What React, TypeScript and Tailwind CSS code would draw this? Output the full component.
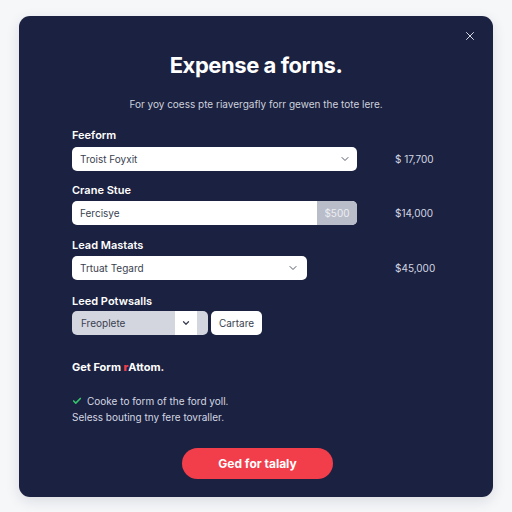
import { ChevronDown, X, Check } from 'lucide-react';

const font = { fontFamily: 'Inter, "Noto Sans", sans-serif' };

function Amount({ children }: { children: React.ReactNode }) {
  return <span className="ml-[38px] text-[10px] text-[#d3d7e3]">{children}</span>;
}

export default function App() {
  return (
    <div className="min-h-[512px] bg-[#f6f7f9] pt-[16px] pl-[19px]" style={font}>
      <div className="relative w-[474px] rounded-[11px] bg-[#1b2140] pb-[18px] pl-[53px] pr-[40px] shadow-[0_4px_14px_rgba(20,25,50,0.12)]">
        {/* close */}
        <button className="absolute right-[16px] top-[13px] text-[#e4e7f0]">
          <X className="h-[14px] w-[14px]" strokeWidth={1.6} />
        </button>

        <h1 className="-ml-[53px] -mr-[40px] pt-[34px] text-center text-[22px] font-bold leading-[30px] tracking-[-0.02em] text-white">
          Expense a forns.
        </h1>
        <p className="-ml-[53px] -mr-[40px] mt-[16px] text-center text-[10px] leading-[16px] text-[#cdd1dd]">
          For yoy coess pte riavergafly forr gewen the tote lere.
        </p>

        {/* field 1 */}
        <div className="mt-[15px] text-[11px] font-semibold leading-[16px] text-white">Feeform</div>
        <div className="mt-[4px] flex items-center">
          <div className="flex h-[24px] w-[285px] items-center justify-between rounded-[5px] bg-white pl-[8px] pr-[6px]">
            <span className="text-[10px] text-[#3a3f50]">Troist Foyxit</span>
            <ChevronDown className="h-[12px] w-[12px] text-[#555a6a]" strokeWidth={2} />
          </div>
          <Amount>$ 17,700</Amount>
        </div>

        {/* field 2 */}
        <div className="mt-[11px] text-[11px] font-semibold leading-[16px] text-white">Crane Stue</div>
        <div className="mt-[3px] flex items-center">
          <div className="flex h-[24px] w-[285px] overflow-hidden rounded-[5px] bg-white">
            <span className="flex flex-1 items-center pl-[8px] text-[10px] text-[#3a3f50]">Fercisye</span>
            <span className="flex w-[40px] items-center justify-center bg-[#b9bcc9] text-[10px] text-[#eceef3]">$500</span>
          </div>
          <Amount>$14,000</Amount>
        </div>

        {/* field 3 */}
        <div className="mt-[12px] text-[11px] font-semibold leading-[16px] text-white">Lead Mastats</div>
        <div className="mt-[3px] flex items-center">
          <div className="flex h-[24px] w-[235px] items-center justify-between rounded-[5px] bg-white pl-[8px] pr-[8px]">
            <span className="text-[10px] text-[#3a3f50]">Trtuat Tegard</span>
            <ChevronDown className="h-[12px] w-[12px] text-[#555a6a]" strokeWidth={2} />
          </div>
          <Amount>
            <span className="ml-[50px]">$45,000</span>
          </Amount>
        </div>

        {/* field 4 */}
        <div className="mt-[13px] text-[11px] font-semibold leading-[16px] text-white">Leed Potwsalls</div>
        <div className="mt-[2px] flex items-center gap-[3px]">
          <div className="flex h-[24px] w-[136px] overflow-hidden rounded-[5px] bg-[#d3d5df]">
            <span className="flex w-[103px] items-center pl-[9px] text-[10px] text-[#3a3f50]">Freoplete</span>
            <span className="flex w-[22px] items-center justify-center bg-white">
              <ChevronDown className="h-[10px] w-[10px] text-[#3a3f50]" strokeWidth={3} />
            </span>
          </div>
          <button className="h-[24px] w-[51px] rounded-[5px] bg-white text-[10px] text-[#3a3f50]">Cartare</button>
        </div>

        <div className="mt-[24px] text-[11px] font-bold leading-[16px] text-white">
          Get Form <span className="font-black text-[#ef3e4a]">r</span>Attom.
        </div>

        <div className="mt-[18px] text-[10px] leading-[16px] text-[#d3d7e3]">
          <div className="flex items-center gap-[5px]">
            <Check className="h-[10px] w-[10px] text-[#34c26a]" strokeWidth={4} />
            <span>Cooke to form of the ford yoll.</span>
          </div>
          <div>Seless bouting tny fere tovraller.</div>
        </div>

        <div className="-ml-[53px] -mr-[40px] mt-[23px] flex justify-center">
          <button className="ml-[3px] h-[31px] w-[151px] rounded-full bg-[#f23d4b] text-[12px] font-bold text-white">
            Ged for talaly
          </button>
        </div>
      </div>
    </div>
  );
}
